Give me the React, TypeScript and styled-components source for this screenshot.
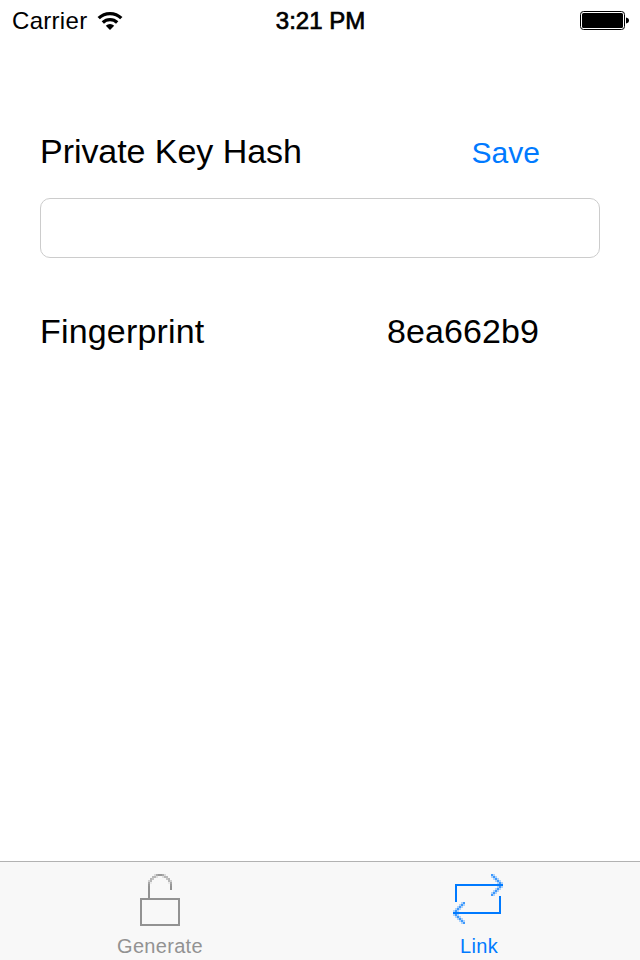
import React from "react";
import styled, { createGlobalStyle } from "styled-components";

const GlobalStyle = createGlobalStyle`
  * { box-sizing: border-box; }
  body { margin: 0; background: #fff; }
`;

const Screen = styled.div`
  width: 640px;
  height: 960px;
  display: flex;
  flex-direction: column;
  background: #fff;
  color: #000;
  font-family: "Liberation Sans", Arial, sans-serif;
  overflow: hidden;
`;

const StatusBar = styled.header`
  height: 40px;
  padding: 0 11px 0 12px;
  display: grid;
  grid-template-columns: 1fr auto 1fr;
  align-items: center;
  font-size: 24px;
  line-height: 40px;
`;

const Carrier = styled.div`
  display: flex;
  align-items: center;
  gap: 10px;
  padding-top: 2px;
  line-height: 38px;
  letter-spacing: 0.3px;
`;

const Clock = styled.div`
  padding-top: 2px;
  line-height: 38px;
  -webkit-text-stroke: 0.7px #000;
`;

const BatterySlot = styled.div`
  display: flex;
  justify-content: flex-end;
`;

const Content = styled.main`
  flex: 1;
  padding: 88px 40px 0;
`;

const Row = styled.div<{ $gap?: number }>`
  height: 48px;
  margin-top: ${(p) => p.$gap ?? 0}px;
  padding-right: 60px;
  display: flex;
  align-items: center;
  justify-content: space-between;
`;

const Label = styled.span<{ $spacing?: number }>`
  padding-bottom: 2px;
  font-size: 34px;
  line-height: 46px;
  letter-spacing: ${(p) => p.$spacing ?? 0}px;
`;

const Value = styled(Label)`
  margin-right: 1px;
`;

const SaveButton = styled.button`
  padding: 2px 0 0;
  border: 0;
  background: none;
  color: #007aff;
  font: 30px/46px "Liberation Sans", Arial, sans-serif;
`;

const HashInput = styled.input`
  display: block;
  width: 560px;
  height: 60px;
  margin-top: 22px;
  padding: 0 14px;
  border: 1px solid #ccc;
  border-radius: 10px;
  background: #fff;
  font: 28px "Liberation Sans", Arial, sans-serif;
  outline: none;
`;

const TabBar = styled.nav`
  height: 99px;
  display: grid;
  grid-template-columns: 1fr 1fr;
  border-top: 1px solid #b2b2b2;
  background: #f8f8f8;
`;

const Tab = styled.button<{ $active?: boolean }>`
  padding: 10px 0 0;
  border: 0;
  background: none;
  display: flex;
  flex-direction: column;
  align-items: center;
  color: ${(p) => (p.$active ? "#007aff" : "#929292")};
`;

const TabLabel = styled.span<{ $shift?: number }>`
  margin-right: ${(p) => p.$shift ?? 0}px;
  font: 20px/24px "Liberation Sans", Arial, sans-serif;
  letter-spacing: 0.3px;
`;

const Glyph = styled.svg`
  display: block;
  flex: none;
`;

const TabGlyph = styled(Glyph)`
  margin-bottom: 2px;
`;

const Wifi = () => (
  <Glyph width="26" height="20" viewBox="0 0 26 20" fill="none" stroke="#000" strokeWidth="3.3">
    <path d="M1.7 7.2a16 16 0 0 1 22.6 0" />
    <path d="M5.8 11.5a10.3 10.3 0 0 1 14.4 0" />
    <path d="M13 19l-4.2-4.3a6 6 0 0 1 8.4 0z" fill="#000" stroke="none" />
  </Glyph>
);

const Battery = () => (
  <Glyph width="49" height="20" viewBox="0 0 49 20">
    <rect x="0.5" y="1.5" width="44" height="18" rx="3" fill="#fff" stroke="#000" />
    <rect x="2" y="3" width="41" height="15" rx="1.5" />
    <path d="M46 7.500c2 .4 3 1.500 3 3s-1 2.600-3 3z" />
  </Glyph>
);

type Block = [x: number, y: number, opacity: number];

const Blocks = ({ items }: { items: Block[] }) => (
  <g fill="currentColor" stroke="none">
    {items.map(([x, y, opacity]) => (
      <rect key={`${x}-${y}`} x={x} y={y} width="2" height="2" opacity={opacity} />
    ))}
  </g>
);

/* Left half of the shackle's curve; the right half is its mirror. */
const curve: Block[] = [
  [18, 12, 0.95], [18, 10, 0.8], [18, 8, 0.4],
  [20, 8, 0.65], [20, 6, 0.65], [20, 10, 0.15],
  [22, 6, 0.5], [22, 4, 0.6], [24, 4, 0.65],
  [24, 2, 0.3], [26, 2, 0.75], [28, 2, 0.95], [26, 4, 0.25],
];
const shackle: Block[] = curve.flatMap(([x, y, o]): Block[] => [[x, y, o], [58 - x, y, o]]);

const Lock = () => (
  <TabGlyph width="60" height="60" viewBox="0 0 60 60" fill="none" stroke="currentColor" strokeWidth="2" shapeRendering="crispEdges">
    <rect x="11" y="27" width="38" height="26" />
    <path d="M19 27V14M41 14V18" />
    <Blocks items={shackle} />
  </TabGlyph>
);

/* A chevron stepped in two-pixel blocks with a lighter fringe on both sides. */
const chevron = (tipX: number, tipY: number, dir: 1 | -1): Block[] => {
  const blocks: Block[] = [[tipX, tipY, 1]];
  for (let i = 1; i <= 5; i++) {
    const x = tipX - dir * i * 2;
    for (const side of [-1, 1]) {
      const y = tipY + side * i * 2;
      blocks.push([x, y, 0.75], [x + dir * 2, y, 0.3]);
      if (i < 5) blocks.push([x - dir * 2, y, 0.3]);
    }
  }
  return blocks;
};

const Repeat = () => (
  <TabGlyph width="60" height="60" viewBox="0 0 60 60" fill="none" stroke="currentColor" strokeWidth="2" shapeRendering="crispEdges">
    <path d="M6 30V13H52" />
    <path d="M50 24V41H4" />
    <Blocks items={chevron(51, 12, 1)} />
    <Blocks items={chevron(3, 40, -1)} />
  </TabGlyph>
);

export default function App() {
  return (
    <>
      <GlobalStyle />
      <Screen>
        <StatusBar>
          <Carrier>
            Carrier
            <Wifi />
          </Carrier>
          <Clock>3:21 PM</Clock>
          <BatterySlot>
            <Battery />
          </BatterySlot>
        </StatusBar>
        <Content>
          <Row>
            <Label $spacing={-0.05}>Private Key Hash</Label>
            <SaveButton>Save</SaveButton>
          </Row>
          <HashInput aria-label="Private Key Hash" />
          <Row $gap={50}>
            <Label $spacing={0.18}>Fingerprint</Label>
            <Value $spacing={0.1}>8ea662b9</Value>
          </Row>
        </Content>
        <TabBar>
          <Tab>
            <Lock />
            <TabLabel>Generate</TabLabel>
          </Tab>
          <Tab $active>
            <Repeat />
            <TabLabel $shift={2}>Link</TabLabel>
          </Tab>
        </TabBar>
      </Screen>
    </>
  );
}
